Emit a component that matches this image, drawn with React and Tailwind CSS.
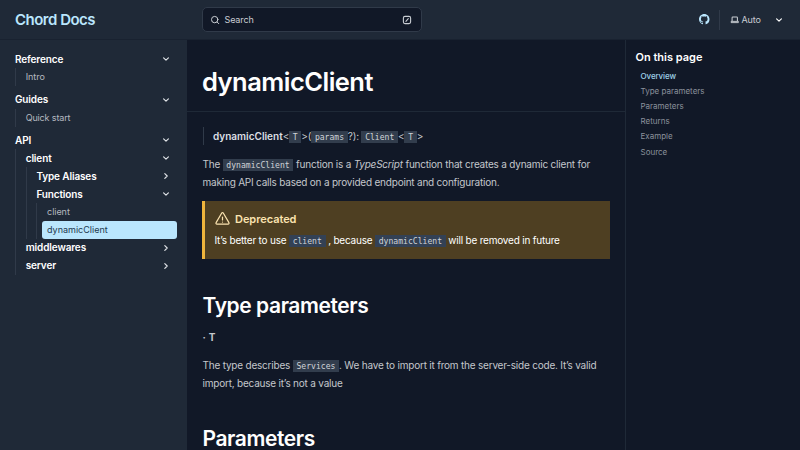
import React from "react";

function Chevron({ open, className = "" }) {
  return (
    <svg viewBox="0 0 10 10" className={`size-2.5 shrink-0 ${className}`} fill="none" stroke="currentColor" strokeWidth="1.15" strokeLinecap="round" strokeLinejoin="round">
      <path d={open ? "M2.6 3.8 5 6.2 7.4 3.8" : "M3.8 2.6 6.2 5 3.8 7.4"} />
    </svg>
  );
}

function Group({ label, open = false, children }) {
  return (
    <div>
      <div className="flex h-[18px] items-center justify-between pr-[16.5px] font-semibold tracking-[-0.13px] text-white">
        <span>{label}</span>
        <Chevron open={open} className="text-[#e2e5e9]" />
      </div>
      {children && <div className="border-l border-[#303a49] pl-[9.7px]">{children}</div>}
    </div>
  );
}

function Code({ children, className = "bg-[#323d4d]" }) {
  return (
    <code className={`inline-block h-3 px-[3.7px] font-['DejaVu_Sans_Mono',monospace] text-[8.1px] leading-3 tracking-normal text-[#d0d3d8] ${className}`}>
      {children}
    </code>
  );
}

function Header() {
  return (
    <header className="flex h-10 shrink-0 items-center border-b border-[#192230] bg-[#1f2937]">
      <div className="w-[202px] pt-[1.5px] pl-[15px] text-[15px] font-semibold tracking-[-0.5px] text-[#bae6fd]">Chord Docs</div>
      <div className="flex h-[25px] w-[220px] items-center rounded-[5px] border border-[#303a49] bg-[#111827] px-[7px] text-[9px] text-[#c9cdd3]">
        <svg viewBox="0 0 10 10" className="mr-[4.5px] size-2.5" fill="none" stroke="currentColor" strokeWidth="1" strokeLinecap="round">
          <circle cx="4.7" cy="4.6" r="3.2" />
          <path d="M7.1 7 8.8 8.7" />
        </svg>
        <span className="tracking-[-0.12px]">Search</span>
        <svg viewBox="0 0 10 10" className="mr-[2px] ml-auto size-2.5" fill="none" stroke="currentColor" strokeWidth="1.1" strokeLinecap="round">
          <rect x="1.4" y="1.4" width="7.2" height="7.2" rx="1.6" />
          <path d="M3.9 6.4 6.3 3.6" />
        </svg>
      </div>
      <svg viewBox="0 0 16 16" className="ml-auto size-[10.5px] text-[#bae6fd]" fill="currentColor">
        <path d="M8 0C3.58 0 0 3.58 0 8c0 3.54 2.29 6.53 5.47 7.59.4.07.55-.17.55-.38 0-.19-.01-.82-.01-1.49-2.01.37-2.53-.49-2.69-.94-.09-.23-.48-.94-.82-1.13-.28-.15-.68-.52-.01-.53.63-.01 1.08.58 1.23.82.72 1.21 1.87.87 2.33.66.07-.52.28-.87.51-1.07-1.78-.2-3.64-.89-3.64-3.95 0-.87.31-1.59.82-2.15-.08-.2-.36-1.02.08-2.12 0 0 .67-.21 2.2.82.64-.18 1.32-.27 2-.27s1.36.09 2 .27c1.53-1.04 2.2-.82 2.2-.82.44 1.1.16 1.92.08 2.12.51.56.82 1.27.82 2.15 0 3.07-1.87 3.75-3.65 3.95.29.25.54.73.54 1.48 0 1.07-.01 1.93-.01 2.2 0 .21.15.46.55.38A8.01 8.01 0 0 0 16 8c0-4.42-3.58-8-8-8Z" />
      </svg>
      <div className="ml-[9.5px] h-5 border-l border-[#303a49]" />
      <div className="ml-[9.5px] flex w-[70.5px] items-center text-[9px] text-[#c9cdd3]">
        <svg viewBox="0 0 10 10" className="mr-[2.5px] size-[9.5px]" fill="none" stroke="currentColor" strokeWidth="1.1">
          <path d="M2.2 6.2V2.8q0-.7.7-.7h4.2q.7 0 .7.7v3.4" />
          <path d="M1.1 6.6h7.8v1.5H1.1Z" fill="currentColor" strokeWidth="0.6" />
        </svg>
        <span className="tracking-[-0.1px]">Auto</span>
        <Chevron open className="mr-[16.5px] ml-auto text-white" />
      </div>
    </header>
  );
}

function Sidebar() {
  return (
    <nav className="w-[187px] shrink-0 bg-[#1f2937] pt-[10px] pl-[15px] text-[10px]">
      <div className="flex flex-col gap-[4.5px]">
        <Group label="Reference" open>
          <div className="flex h-[18px] items-center text-[9px] tracking-[-0.05px] text-[#b5b9c0]">Intro</div>
        </Group>
        <Group label="Guides" open>
          <div className="flex h-[18px] items-center text-[9px] tracking-[-0.15px] text-[#b5b9c0]">Quick start</div>
        </Group>
        <Group label="API" open>
          <Group label="client" open>
            <Group label="Type Aliases" />
            <Group label="Functions" open>
              <div className="flex h-[18px] items-center text-[9px] tracking-[-0.05px] text-[#b5b9c0]">client</div>
              <div className="mr-[10px] -ml-[5.5px] flex h-[17.5px] items-center rounded-[3px] bg-[#bae6fd] pl-[5.5px] text-[9px] text-[#1e3a4f]">dynamicClient</div>
            </Group>
          </Group>
          <Group label="middlewares" />
          <Group label="server" />
        </Group>
      </div>
    </nav>
  );
}

function Toc() {
  const items = ["Type parameters", "Parameters", "Returns", "Example", "Source"];
  return (
    <aside className="flex-1 border-l border-[#1f2937] pt-[9px] pl-[9.5px]">
      <h2 className="text-[11px] leading-4 font-semibold text-white">On this page</h2>
      <ul className="mt-[3.5px] pl-[5px] text-[8px] leading-[15.2px] text-[#8b919c]">
        <li className="font-medium tracking-[-0.1px] text-[#9fd0e8]">Overview</li>
        {items.map((t) => (
          <li key={t}>{t}</li>
        ))}
      </ul>
    </aside>
  );
}

function Article() {
  return (
    <main className="w-[438px] shrink-0 text-[10px] leading-[18px] tracking-[-0.21px] text-[#c4c7cc]">
      <div className="h-[72px] border-b border-[#1f2937] pt-[26px] pl-[15px]">
        <h1 className="text-[25.5px] leading-8 font-semibold tracking-[-0.52px] whitespace-nowrap text-white">dynamicClient</h1>
      </div>
      <div className="pr-[15px] pl-[15.5px]">
        <blockquote className="mt-[15px] h-[18px] border-l border-[#303a49] pl-[9.5px] whitespace-nowrap">
          <span className="font-semibold tracking-normal text-[#dcdfe3]">dynamicClient</span>&lt;<Code>T</Code>&gt;(<Code>params</Code>?): <Code>Client</Code>&lt;<Code>T</Code>&gt;
        </blockquote>
        <p className="mt-[10px] h-9 whitespace-nowrap">
          The <Code>dynamicClient</Code> function is a <em>TypeScript</em> function that creates a dynamic client for
          <br />
          making API calls based on a provided endpoint and configuration.
        </p>
        <section className="mt-[10px] -ml-[0.5px] h-[58px] w-[408px] border-l-[3px] border-[#eeb43c] bg-[#4e3f22] pt-[8px] pl-[9.5px]">
          <div className="flex h-[19px] items-center text-[11px] font-semibold tracking-[-0.05px] text-[#fbe3b0]">
            <svg viewBox="0 0 15 15" className="mr-[5.5px] size-[15px]" fill="none" stroke="currentColor" strokeWidth="1.2" strokeLinecap="round" strokeLinejoin="round">
              <path d="M6.6 2.2 1.1 11.6q-.5 1.4.9 1.6h11q1.4-.2.9-1.6L8.4 2.2q-.9-1-1.8 0Z" />
              <path d="M7.5 6v3M7.5 11v.1" />
            </svg>
            Deprecated
          </div>
          <p className="mt-[3px] leading-[18px] whitespace-nowrap text-white">
            It’s better to use <Code className="bg-[#334155]">client</Code> , because <Code className="bg-[#334155]">dynamicClient</Code> will be removed in future
          </p>
        </section>
        <h2 className="mt-[32px] text-[21px] leading-[30px] font-semibold tracking-[-0.42px] text-white">Type parameters</h2>
        <h3 className="mt-[7px] flex gap-[3px] leading-[18px]">
          <strong className="font-bold">·</strong>
          <strong className="font-bold">T</strong>
        </h3>
        <p className="mt-[10px] h-9 whitespace-nowrap">
          The type describes <Code>Services</Code>. We have to import it from the server-side code. It’s valid
          <br />
          import, because it’s not a value
        </p>
        <h2 className="mt-[31.5px] text-[21px] leading-[30px] font-semibold tracking-[-0.42px] text-white">Parameters</h2>
      </div>
    </main>
  );
}

export default function App() {
  return (
    <div className="flex h-[450px] w-[800px] flex-col overflow-hidden bg-[#111827] font-[Inter,sans-serif]">
      <Header />
      <div className="flex min-h-0 flex-1">
        <Sidebar />
        <Article />
        <Toc />
      </div>
    </div>
  );
}
